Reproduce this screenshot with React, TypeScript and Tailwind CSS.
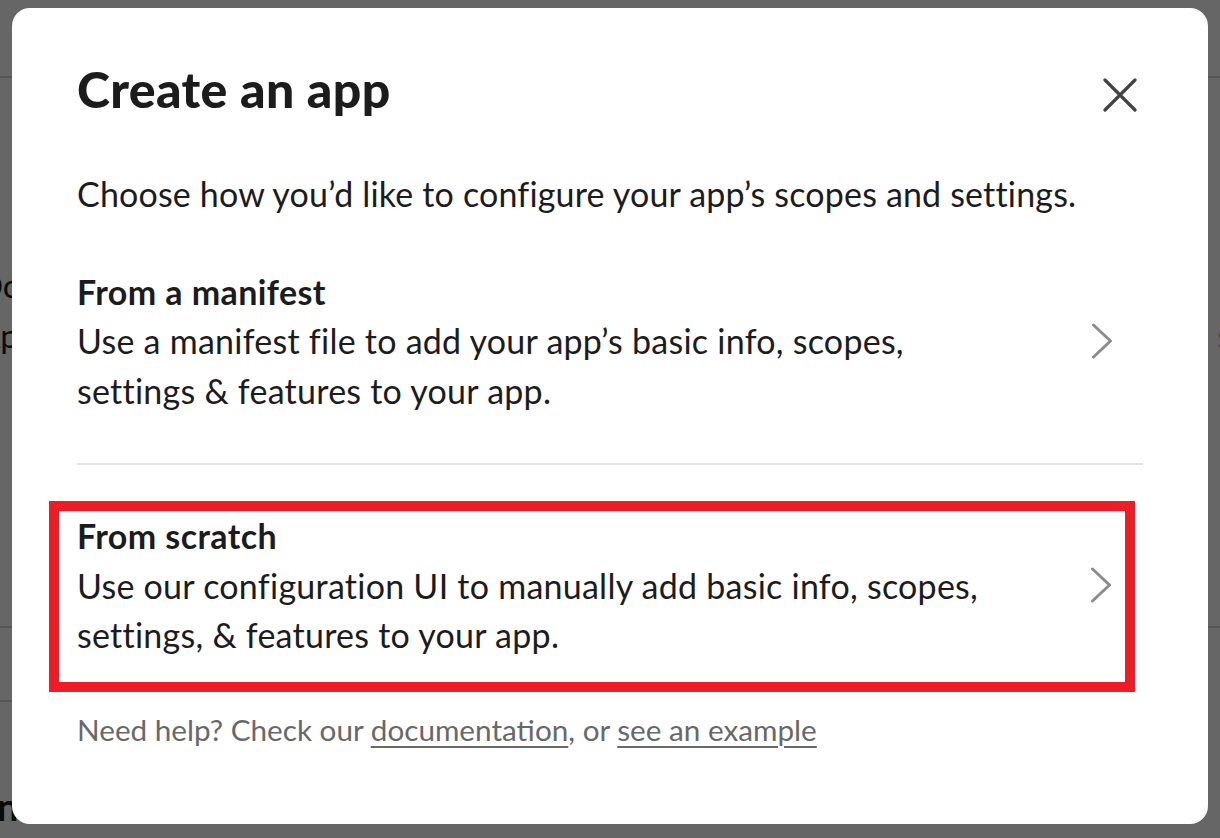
import { useState } from "react";

function CloseIcon() {
  return (
    <svg width="34" height="34" viewBox="0 0 34 34" fill="none">
      <path
        d="M2 2L32 32M32 2L2 32"
        stroke="#454245"
        strokeWidth="3.2"
        strokeLinecap="round"
      />
    </svg>
  );
}

function Chevron() {
  return (
    <svg width="22" height="36" viewBox="0 0 22 36" fill="none">
      <path
        d="M2.5 2L19.5 18L2.5 34"
        stroke="#8d8b8d"
        strokeWidth="3"
        strokeLinecap="round"
        strokeLinejoin="round"
      />
    </svg>
  );
}

type OptionProps = {
  title: string;
  lines: string[];
  highlighted?: boolean;
};

function OptionText({ title, lines }: OptionProps) {
  return (
    <div>
      <div className="text-[34px] font-bold leading-[49.5px] tracking-[0.4px]">
        {title}
      </div>
      {lines.map((l) => (
        <div key={l} className="text-[34px] leading-[49.5px] tracking-[0.25px]">
          {l}
        </div>
      ))}
    </div>
  );
}

function Option(props: OptionProps) {
  if (props.highlighted) {
    return (
      <button className="-ml-[28px] mr-[8px] flex items-center justify-between border-[10px] border-[#ee1c25] pb-[22px] pl-[18px] pr-[13px] text-left">
        <OptionText {...props} />
        <Chevron />
      </button>
    );
  }
  return (
    <button className="flex items-center justify-between pr-[30px] text-left">
      <OptionText {...props} />
      <Chevron />
    </button>
  );
}

export default function App() {
  const [open, setOpen] = useState(true);

  return (
    <div
      className="relative h-[838px] w-full overflow-hidden bg-white text-[#1d1c1d]"
      style={{ fontFamily: "Lato, 'Noto Sans', sans-serif" }}
    >
      {/* Page behind the modal */}
      <div className="h-[78px] border-b-2 border-[#d4d4d4]" />
      <div className="flex justify-between pt-[182px] text-[33px] leading-[50px]">
        <div className="-ml-[22px]">
          <div>Do</div>
          <div>Apl</div>
        </div>
        <div className="-mr-[12px] text-right">
          <div>t</div>
          <div>s</div>
        </div>
      </div>
      <div className="mt-[266px] h-[2px] bg-[#d4d4d4]" />
      <div className="mt-[72px] h-[2px] w-[12px] bg-[#d4d4d4]" />
      <div className="-ml-[14px] mt-[84px] text-[38px] font-bold leading-[40px]">
        In
      </div>

      {/* Overlay + modal */}
      {open && (
        <div className="absolute inset-0 bg-black/60 px-[12px] pt-[8px]">
          <div className="flex h-[816px] flex-col rounded-[18px] bg-white px-[65px] pt-[51px]">
            <div className="flex items-start justify-between">
              <h1 className="text-[50px] font-black leading-[60px] tracking-[0.35px]">
                Create an app
              </h1>
              <button
                onClick={() => setOpen(false)}
                className="mr-[6px] mt-[19px]"
              >
                <CloseIcon />
              </button>
            </div>

            <p className="mt-[49.5px] text-[34px] leading-[49.5px] tracking-[0.17px]">
              Choose how you’d like to configure your app’s scopes and settings.
            </p>

            <div className="mt-[48.5px] flex flex-col">
              <Option
                title="From a manifest"
                lines={[
                  "Use a manifest file to add your app’s basic info, scopes,",
                  "settings & features to your app.",
                ]}
              />
              <div className="mt-[48px] h-[2px] bg-[#e2e2e2]" />
              <div className="mt-[36px] flex flex-col">
                <Option
                  highlighted
                  title="From scratch"
                  lines={[
                    "Use our configuration UI to manually add basic info, scopes,",
                    "settings, & features to your app.",
                  ]}
                />
              </div>
            </div>

            <p className="mt-[16px] text-[29.7px] leading-[44px] text-[#696869]">
              Need help? Check our{" "}
              <a className="underline decoration-2 underline-offset-[5px]">
                documentation
              </a>
              , or{" "}
              <a className="underline decoration-2 underline-offset-[5px]">
                see an example
              </a>
            </p>
          </div>
        </div>
      )}
    </div>
  );
}
